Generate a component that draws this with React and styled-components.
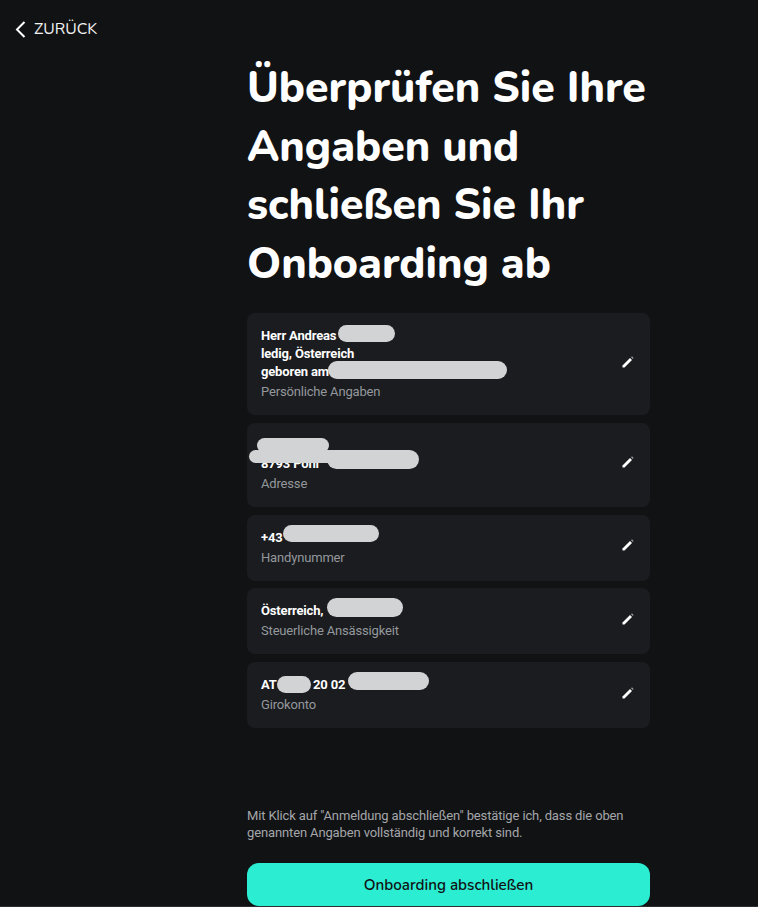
import React from 'react';
import styled, { createGlobalStyle } from 'styled-components';

const GlobalStyle = createGlobalStyle`
  html, body {
    margin: 0;
    padding: 0;
    height: 100%;
    background-color: #111214;
    overflow: hidden;
  }
  * {
    box-sizing: border-box;
  }
`;

const Page = styled.div`
  position: relative;
  width: 758px;
  height: 907px;
  padding: 19px 0 0 15px;
  background-color: #111214;
  border-bottom: 1px solid #2c2e30;
  color: #fff;
  font-family: 'Nunito', 'Lato', 'Noto Sans', sans-serif;
  overflow: hidden;
`;

const BackLink = styled.a`
  display: flex;
  align-items: center;
  gap: 8px;
  height: 20px;
  font-size: 15.75px;
  color: #f2f2f2;
  text-transform: uppercase;
`;

const Content = styled.main`
  width: 403px;
  margin: 20px 0 0 232px;
`;

const Title = styled.h1`
  margin: 0 0 20px;
  font-size: 42.9px;
  line-height: 58.5px;
  font-weight: 800;
  color: #fff;
`;

const CardList = styled.div`
  display: flex;
  flex-direction: column;
  gap: 7.75px;
`;

const Card = styled.div`
  display: flex;
  align-items: center;
  justify-content: space-between;
  padding: 14px 16px 14px 14px;
  background-color: #1a1c1f;
  border-radius: 8px;
`;

const CardText = styled.div`
  position: relative;
  flex: 1;
`;

const Value = styled.div`
  font-family: 'Roboto', sans-serif;
  font-size: 13px;
  line-height: 18px;
  font-weight: 700;
  letter-spacing: -0.17px;
  color: #fff;
  white-space: pre;
`;

const Label = styled.div`
  padding-top: 1px;
  font-family: 'Roboto', sans-serif;
  font-size: 13px;
  line-height: 19px;
  letter-spacing: -0.17px;
  color: #94989c;
`;

const Scribble = styled.span`
  position: absolute;
  left: ${(p) => p.$x}px;
  top: ${(p) => p.$y}px;
  width: ${(p) => p.$w}px;
  height: ${(p) => p.$h}px;
  background-color: #d2d3d5;
  border-radius: ${(p) => p.$h / 2}px;
`;

const EditIcon = styled.svg`
  width: 12px;
  height: 12px;
  margin-bottom: 5px;
`;

const Notice = styled.p`
  margin: 79px 0 0;
  font-family: 'Roboto', sans-serif;
  font-size: 13px;
  line-height: 17px;
  letter-spacing: -0.13px;
  color: #a4a6a9;
`;

const SubmitButton = styled.button`
  display: block;
  width: 100%;
  height: 43px;
  margin-top: 22px;
  border: none;
  border-radius: 12px;
  background-color: #2aedd2;
  color: #111214;
  font-family: inherit;
  font-size: 15.2px;
  font-weight: 600;
`;

const Chevron = () => (
  <svg width="11" height="17" viewBox="0 0 11 17" fill="none">
    <path d="M9.5 1L2 8.5l7.5 7.5" stroke="#fff" strokeWidth="2" />
  </svg>
);

const Pencil = () => (
  <EditIcon viewBox="0 0 12 12">
    <path d="M0.5 11.5V9.5L8 2l2 2L2.5 11.5z" fill="#fff" />
    <path d="M9 1.2l1-.9 1.6 1.6-.9 1z" fill="#9a9c9e" />
  </EditIcon>
);

const cards = [
  {
    label: 'Persönliche Angaben',
    lines: ['Herr Andreas', 'ledig, Österreich', 'geboren am'],
    scribbles: [
      { x: 77, y: -2, w: 57, h: 17 },
      { x: 67, y: 34, w: 179, h: 18 },
    ],
  },
  {
    label: 'Adresse',
    lines: [' ', '8793 Pöhl'],
    scribbles: [
      { x: -4, y: 1, w: 72, h: 15 },
      { x: -12, y: 13, w: 100, h: 13 },
      { x: 66, y: 13, w: 92, h: 19 },
    ],
  },
  {
    label: 'Handynummer',
    lines: ['+43'],
    scribbles: [{ x: 22, y: -4, w: 96, h: 17 }],
  },
  {
    label: 'Steuerliche Ansässigkeit',
    lines: ['Österreich,'],
    scribbles: [{ x: 66, y: -4, w: 76, h: 19 }],
  },
  {
    label: 'Girokonto',
    lines: ['AT            20 02'],
    scribbles: [
      { x: 16, y: 0, w: 34, h: 17 },
      { x: 87, y: -4, w: 81, h: 18 },
    ],
  },
];

const App = () => (
  <Page>
    <GlobalStyle />
    <BackLink>
      <Chevron />
      Zurück
    </BackLink>
    <Content>
      <Title>
        Überprüfen Sie Ihre
        <br />
        Angaben und
        <br />
        schließen Sie Ihr
        <br />
        Onboarding ab
      </Title>
      <CardList>
        {cards.map((card) => (
          <Card key={card.label}>
            <CardText>
              {card.lines.map((line, i) => (
                <Value key={i}>{line}</Value>
              ))}
              <Label>{card.label}</Label>
              {card.scribbles.map((s, i) => (
                <Scribble key={i} $x={s.x} $y={s.y} $w={s.w} $h={s.h} />
              ))}
            </CardText>
            <Pencil />
          </Card>
        ))}
      </CardList>
      <Notice>
        Mit Klick auf "Anmeldung abschließen" bestätige ich, dass die oben
        genannten Angaben vollständig und korrekt sind.
      </Notice>
      <SubmitButton>Onboarding abschließen</SubmitButton>
    </Content>
  </Page>
);

export default App;
